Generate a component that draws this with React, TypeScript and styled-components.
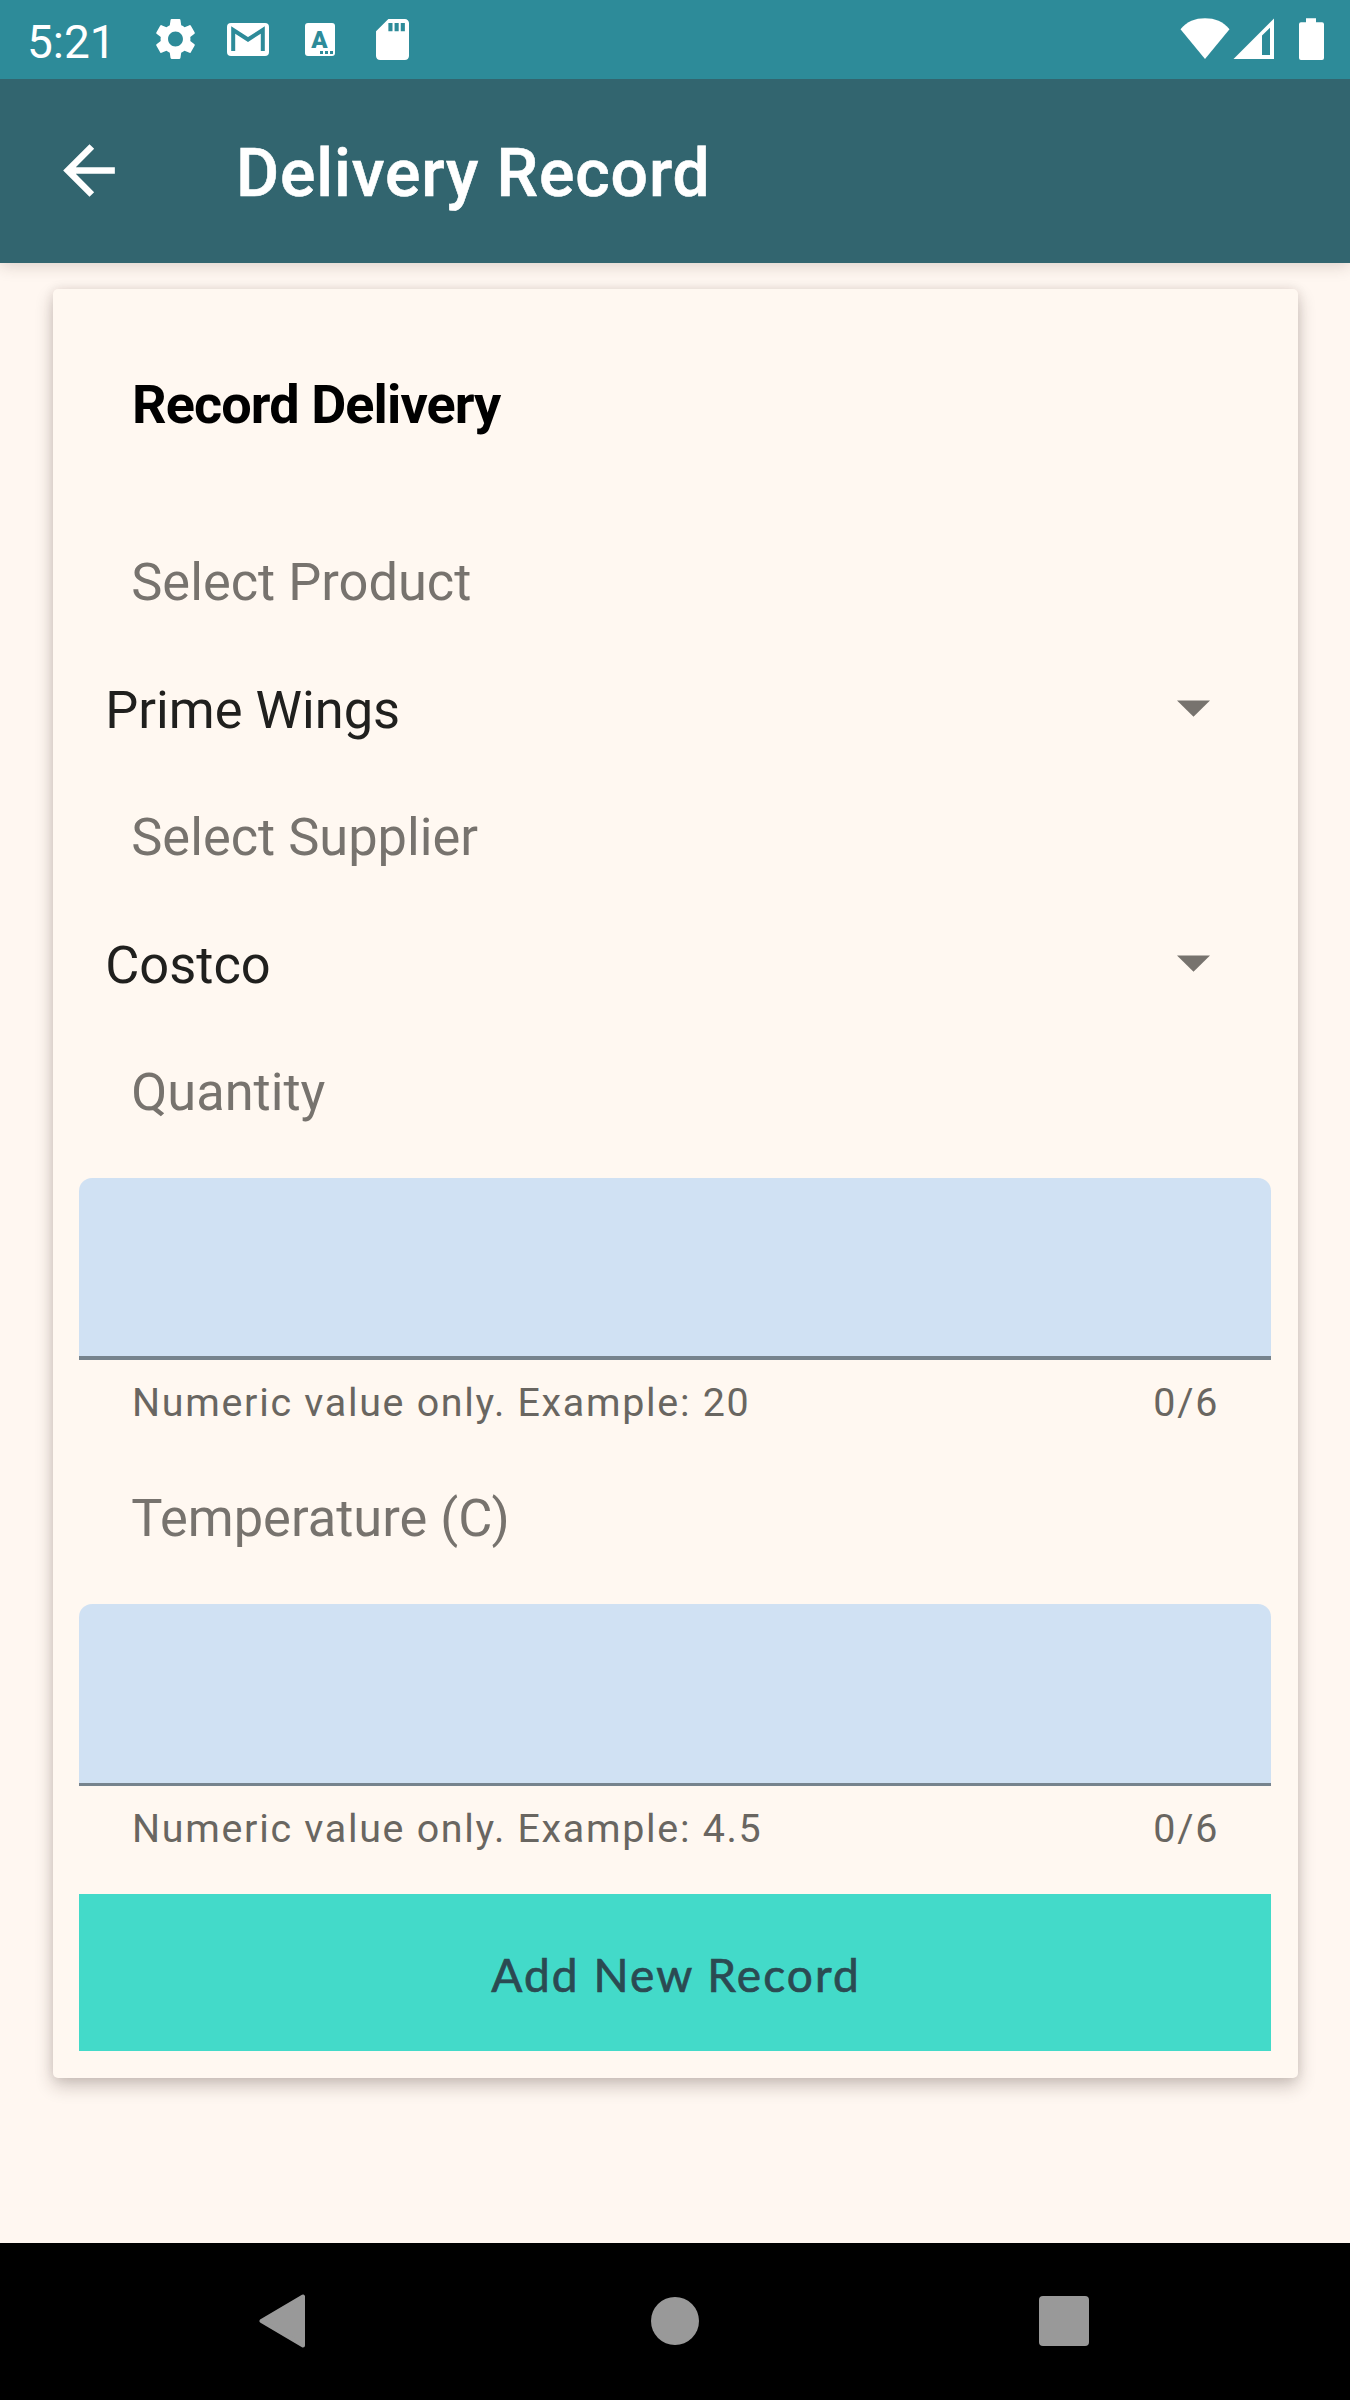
import React from 'react';
import styled, { createGlobalStyle } from 'styled-components';

const GlobalStyle = createGlobalStyle`
  *, *::before, *::after { box-sizing: border-box; }
  html, body { margin: 0; padding: 0; }
  body { background: #fff7f1; font-family: Roboto, "Liberation Sans", sans-serif; }
  svg { display: block; }
`;

const Screen = styled.div`
  width: 1350px;
  height: 2400px;
  display: flex;
  flex-direction: column;
  overflow: hidden;
  background: #fff7f1;
`;

const StatusBar = styled.header`
  height: 79px;
  flex: none;
  display: flex;
  align-items: flex-start;
  justify-content: space-between;
  padding: 18px 26px 0 27px;
  background: #2d8b99;
  color: #fff;
`;

const StatusGroup = styled.div`
  display: flex;
  align-items: flex-start;
`;

const Clock = styled.span`
  width: 128px;
  font-size: 46px;
  line-height: 48px;
`;

const StatusIcon = styled.svg<{ $gap?: number; $top?: number }>`
  flex: none;
  margin-left: ${(p) => p.$gap ?? 0}px;
  margin-top: ${(p) => p.$top ?? 0}px;
`;

const LetterBadge = styled.span`
  width: 30px;
  height: 33px;
  margin: 5px 0 0 36px;
  padding: 3px 1px 0 0;
  border-radius: 3px;
  background: #fff;
  color: #2d8b99;
  display: flex;
  flex-direction: column;
  align-items: center;
`;

const BadgeLetter = styled.span`
  font-size: 24px;
  font-weight: 900;
  line-height: 28px;
  height: 25px;
`;

const Dots = styled.span`
  align-self: flex-end;
  display: flex;
  gap: 2px;
  margin-right: 1px;
  i { width: 3px; height: 3px; background: #2d8b99; }
`;

const AppBar = styled.nav`
  height: 184px;
  flex: none;
  display: flex;
  align-items: center;
  padding: 0 50px;
  background: #32656f;
  box-shadow: 0 2px 16px rgba(60, 40, 30, 0.2);
  clip-path: inset(0 0 -24px 0);
  color: #fff;
`;

const BackButton = styled.button`
  margin: 0 107px 2px 0;
  padding: 0;
  border: 0;
  background: none;
  color: inherit;
`;

const AppTitle = styled.h1`
  margin: 5px 0 0;
  font-size: 66px;
  font-weight: 500;
  letter-spacing: 0.9px;
  line-height: 80px;
  -webkit-text-stroke: 0.6px #fff;
`;

const Main = styled.main`
  flex: 1;
  padding: 26px 52px 0 53px;
`;

const Card = styled.section`
  height: 1789px;
  display: flex;
  flex-direction: column;
  padding: 76px 27px 27px 26px;
  border-radius: 5px;
  background: #fff8f1;
  box-shadow: 0 8px 18px rgba(40, 25, 20, 0.24), 0 0 11px rgba(40, 25, 20, 0.09);
`;

const CardTitle = styled.h2`
  margin: 0 0 73.5px;
  padding-left: 53px;
  font-size: 54px;
  font-weight: 700;
  letter-spacing: -0.9px;
  line-height: 80px;
  color: #000;
`;

const Label = styled.label`
  display: block;
  height: 127.5px;
  padding-left: 52.25px;
  font-size: 52.4px;
  line-height: 127.5px;
  color: #77736e;
`;

const Spinner = styled.div`
  height: 127.5px;
  display: flex;
  align-items: center;
  justify-content: space-between;
  padding: 0 61px 0 26.25px;
  font-size: 52.4px;
  line-height: 128.5px;
  color: #20201e;

  svg { margin-bottom: 2px; }
`;

const Field = styled.div<{ $line: number }>`
  flex: none;
  height: 182px;
  margin-top: 22px;
  border-radius: 13px 13px 0 0;
  background: linear-gradient(to top, #76838d ${(p) => p.$line}px, #d0e1f3 ${(p) => p.$line}px);
`;

const Helper = styled.div`
  flex: none;
  height: 94.5px;
  display: flex;
  justify-content: space-between;
  padding: 0 52px 0 53px;
  font-size: 39.4px;
  letter-spacing: 1.71px;
  line-height: 85px;
  color: #696661;
`;

const AddButton = styled.button`
  flex: none;
  height: 157px;
  margin: auto 0 0;
  padding: 3px 0 0 2px;
  border: 0;
  background: #43dac9;
  color: #2b4a52;
  font-family: Lato, "Open Sans", sans-serif;
  font-size: 46px;
  font-weight: 400;
  letter-spacing: 2.1px;
  -webkit-text-stroke: 0.7px #2b4a52;
`;

const NavBar = styled.footer`
  height: 157px;
  flex: none;
  display: grid;
  grid-template-columns: 54px 1fr 54px;
  justify-items: center;
  align-items: center;
  padding: 0 259px 1px;
  background: #000;
`;

const NavIcon = styled.svg<{ $shift?: number }>`
  margin-left: ${(p) => p.$shift ?? 0}px;
`;

const Caret = () => (
  <svg width="33" height="17" viewBox="0 0 33 17">
    <path d="M0 0.4h33L16.5 16.8z" fill="#77736e" />
  </svg>
);

type NumericFieldProps = { hint: string; line: number };

const NumericField = ({ hint, line }: NumericFieldProps) => (
  <>
    <Field $line={line} />
    <Helper>
      <span>{hint}</span>
      <span>0/6</span>
    </Helper>
  </>
);

export default function App() {
  return (
    <>
      <GlobalStyle />
      <Screen>
        <StatusBar>
          <StatusGroup>
            <Clock>5:21</Clock>
            <StatusIcon width="41" height="42" viewBox="2.1 1.9 19.8 20.2" fill="#fff" preserveAspectRatio="none">
              <path d="M19.14 12.94c.04-.3.06-.61.06-.94 0-.32-.02-.64-.07-.94l2.03-1.58c.18-.14.23-.41.12-.61l-1.92-3.32c-.12-.22-.37-.29-.59-.22l-2.39.96c-.5-.38-1.03-.7-1.62-.94L14.4 2.81c-.04-.24-.24-.41-.48-.41h-3.84c-.24 0-.43.17-.47.41l-.36 2.54c-.59.24-1.13.57-1.62.94l-2.39-.96c-.22-.08-.47 0-.59.22L2.74 8.87c-.12.21-.08.47.12.61l2.03 1.58c-.05.3-.09.63-.09.94s.02.64.07.94l-2.03 1.58c-.18.14-.23.41-.12.61l1.92 3.32c.12.22.37.29.59.22l2.39-.96c.5.38 1.03.7 1.62.94l.36 2.54c.05.24.24.41.48.41h3.84c.24 0 .44-.17.47-.41l.36-2.54c.59-.24 1.13-.56 1.62-.94l2.39.96c.22.08.47 0 .59-.22l1.92-3.32c.12-.22.07-.47-.12-.61l-2.01-1.58zM12 15.6c-1.98 0-3.6-1.62-3.6-3.6s1.62-3.6 3.6-3.6 3.6 1.62 3.6 3.6-1.62 3.6-3.6 3.6z" />
            </StatusIcon>
            <StatusIcon $gap={31} $top={5} width="42" height="33" viewBox="0 0 42 33">
              <rect width="42" height="33" rx="4" fill="#fff" />
              <path d="M6.2 28V7L21 16.5 35.8 7v21" fill="none" stroke="#2d8b99" strokeWidth="4" />
            </StatusIcon>
            <LetterBadge>
              <BadgeLetter>A</BadgeLetter>
              <Dots><i /><i /><i /></Dots>
            </LetterBadge>
            <StatusIcon $gap={41} $top={1} width="33" height="41" viewBox="4 2 16 20" fill="#fff" preserveAspectRatio="none">
              <path d="M18 2h-8L4.020 8 4 20c0 1.100.9 2 2 2h12c1.100 0 2-.9 2-2V4c0-1.100-.9-2-2-2zm-6 6h-2V4h2v4zm3 0h-2V4h2v4zm3 0h-2V4h2v4z" />
            </StatusIcon>
          </StatusGroup>
          <StatusGroup>
            <StatusIcon width="50" height="42" viewBox="0 0 50 42" fill="#fff">
              <path d="M0.500 11.200C7 3.500 15 0.300 25 0.300s18 3.200 24.500 10.900L25 41z" />
            </StatusIcon>
            <StatusIcon $gap={3} width="42" height="42" viewBox="0 0 42 42" fill="#fff">
              <path fillRule="evenodd" d="M0.500 41L41 0.500V41zM29 17.500V37h8V9.800z" />
            </StatusIcon>
            <StatusIcon $gap={24} width="25" height="42" viewBox="0 0 25 42" fill="#fff">
              <path d="M7 0.300h10v4h6q2 0 2 2V40q0 2-2 2H2q-2 0-2-2V6.300q0-2 2-2h5z" />
            </StatusIcon>
          </StatusGroup>
        </StatusBar>

        <AppBar>
          <BackButton aria-label="Back">
            <svg width="79" height="79" viewBox="0 0 24 24" fill="currentColor">
              <path d="M19.700 11H7.830l5.590-5.590L12 4l-8 8 8 8 1.410-1.410L7.830 13H19.700v-2z" />
            </svg>
          </BackButton>
          <AppTitle>Delivery Record</AppTitle>
        </AppBar>

        <Main>
          <Card>
            <CardTitle>Record Delivery</CardTitle>
            <Label>Select Product</Label>
            <Spinner><span>Prime Wings</span><Caret /></Spinner>
            <Label>Select Supplier</Label>
            <Spinner><span>Costco</span><Caret /></Spinner>
            <Label>Quantity</Label>
            <NumericField hint="Numeric value only. Example: 20" line={4} />
            <Label>Temperature (C)</Label>
            <NumericField hint="Numeric value only. Example: 4.5" line={3} />
            <AddButton>Add New Record</AddButton>
          </Card>
        </Main>

        <NavBar>
          <NavIcon $shift={-7} width="54" height="54" viewBox="0 0 54 54">
            <path d="M5.500 27L47 2.500v49z" fill="#999" stroke="#999" strokeWidth="4" strokeLinejoin="round" />
          </NavIcon>
          <NavIcon width="50" height="50" viewBox="0 0 50 50"><circle cx="25" cy="25" r="24" fill="#999" /></NavIcon>
          <NavIcon width="50" height="50" viewBox="0 0 50 50"><rect width="50" height="50" rx="4" fill="#999" /></NavIcon>
        </NavBar>
      </Screen>
    </>
  );
}
